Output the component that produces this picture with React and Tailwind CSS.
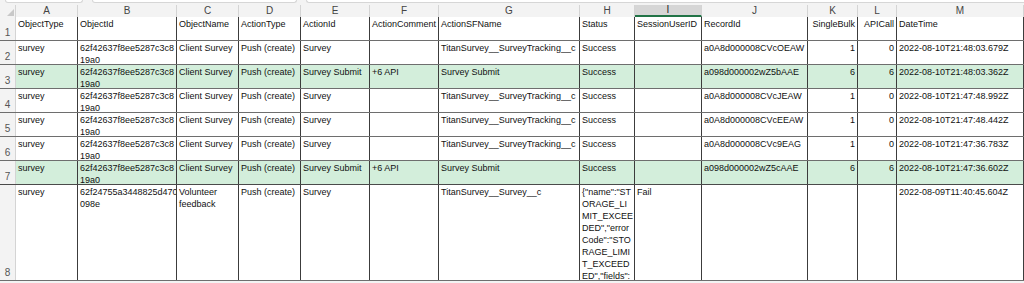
import React from 'react';

const cols = [
  { key: 'A', w: 62 },
  { key: 'B', w: 99 },
  { key: 'C', w: 62 },
  { key: 'D', w: 62 },
  { key: 'E', w: 69 },
  { key: 'F', w: 69 },
  { key: 'G', w: 141 },
  { key: 'H', w: 55 },
  { key: 'I', w: 67 },
  { key: 'J', w: 106 },
  { key: 'K', w: 50, right: true },
  { key: 'L', w: 39, right: true },
  { key: 'M', w: 127 },
];

const oid = ['62f42637f8ee5287c3c8', '19a0'];

const rows = [
  {
    h: 24,
    cells: ['ObjectType', 'ObjectId', 'ObjectName', 'ActionType', 'ActionId', 'ActionComment', 'ActionSFName', 'Status', 'SessionUserID', 'RecordId', 'SingleBulk', 'APICall', 'DateTime'],
  },
  {
    h: 24,
    cells: ['survey', oid, 'Client Survey', 'Push (create)', 'Survey', '', 'TitanSurvey__SurveyTracking__c', 'Success', '', 'a0A8d000008CVcOEAW', '1', '0', '2022-08-10T21:48:03.679Z'],
  },
  {
    h: 24,
    green: true,
    cells: ['survey', oid, 'Client Survey', 'Push (create)', 'Survey Submit', '+6 API', 'Survey Submit', 'Success', '', 'a098d000002wZ5bAAE', '6', '6', '2022-08-10T21:48:03.362Z'],
  },
  {
    h: 24,
    cells: ['survey', oid, 'Client Survey', 'Push (create)', 'Survey', '', 'TitanSurvey__SurveyTracking__c', 'Success', '', 'a0A8d000008CVcJEAW', '1', '0', '2022-08-10T21:47:48.992Z'],
  },
  {
    h: 24,
    cells: ['survey', oid, 'Client Survey', 'Push (create)', 'Survey', '', 'TitanSurvey__SurveyTracking__c', 'Success', '', 'a0A8d000008CVcEEAW', '1', '0', '2022-08-10T21:47:48.442Z'],
  },
  {
    h: 24,
    cells: ['survey', oid, 'Client Survey', 'Push (create)', 'Survey', '', 'TitanSurvey__SurveyTracking__c', 'Success', '', 'a0A8d000008CVc9EAG', '1', '0', '2022-08-10T21:47:36.783Z'],
  },
  {
    h: 24,
    green: true,
    cells: ['survey', oid, 'Client Survey', 'Push (create)', 'Survey Submit', '+6 API', 'Survey Submit', 'Success', '', 'a098d000002wZ5cAAE', '6', '6', '2022-08-10T21:47:36.602Z'],
  },
  {
    h: 96,
    cells: [
      'survey',
      ['62f24755a3448825d470', '098e'],
      ['Volunteer', 'feedback'],
      'Push (create)',
      'Survey',
      '',
      'TitanSurvey__Survey__c',
      ['{"name":"ST', 'ORAGE_LI', 'MIT_EXCEE', 'DED","error', 'Code":"STO', 'RAGE_LIMI', 'T_EXCEED', 'ED","fields":'],
      'Fail',
      '',
      '',
      '',
      '2022-08-09T11:40:45.604Z',
    ],
  },
];

function Cell({ col, value, green }) {
  const lines = Array.isArray(value) ? value : [value];
  return (
    <div
      className={`shrink-0 overflow-hidden border-r border-[#3c3c3c] pl-[2px] pr-[2px] pt-[1px] text-[9px] leading-[12px] whitespace-nowrap text-[#111] ${col.right ? 'text-right' : ''} ${green ? 'bg-[#d3eedb]' : 'bg-white'}`}
      style={{ width: col.w }}
    >
      {lines.map((l, i) => (
        <div key={i}>{l}</div>
      ))}
    </div>
  );
}

export default function App() {
  return (
    <div className="w-[1024px] h-[283px] overflow-hidden bg-[#f3f3f3] font-['Liberation_Sans',Arial,sans-serif]">
      {/* formula bar remnants */}
      <div className="flex h-[5px] gap-[9px] pl-[5px]">
        <div className="w-[78px] h-[3px] bg-white border border-t-0 border-[#d6d6d6] rounded-b-[3px]" />
        <div className="w-[205px] h-[3px] bg-white border border-t-0 border-[#d6d6d6] rounded-b-[3px]" />
        <div className="flex-1 h-[3px] bg-white border border-t-0 border-r-0 border-[#d6d6d6] rounded-bl-[3px]" />
      </div>

      {/* column letters */}
      <div className="flex h-[12px]">
        <div className="relative w-[16px] shrink-0 border-r border-[#d4d4d4]">
          <div className="absolute right-[1px] bottom-[1px] w-0 h-0 border-l-[7px] border-l-transparent border-b-[7px] border-b-[#c8c8c8]" />
        </div>
        {cols.map((c) => (
          <div
            key={c.key}
            className={`shrink-0 flex items-center justify-center text-[10px] leading-none border-r border-[#d4d4d4] ${c.key === 'I' ? 'bg-[#d6d6d6] border-b-2 border-b-[#217346] text-[#222]' : 'text-[#444]'}`}
            style={{ width: c.w }}
          >
            {c.key}
          </div>
        ))}
      </div>

      {/* data rows */}
      {rows.map((r, ri) => (
        <div
          key={ri}
          className={`flex border-b ${ri === 6 ? 'border-[#4a4a4a]' : 'border-[#6e6e6e]'}`}
          style={{ height: r.h }}
        >
          <div className="w-[16px] shrink-0 flex items-end justify-center pb-[2px] text-[10px] leading-none text-[#555] bg-[#f3f3f3] border-r border-[#d4d4d4]">
            {ri + 1}
          </div>
          {cols.map((c, ci) => (
            <Cell key={c.key} col={c} value={r.cells[ci]} green={r.green} />
          ))}
        </div>
      ))}
    </div>
  );
}
